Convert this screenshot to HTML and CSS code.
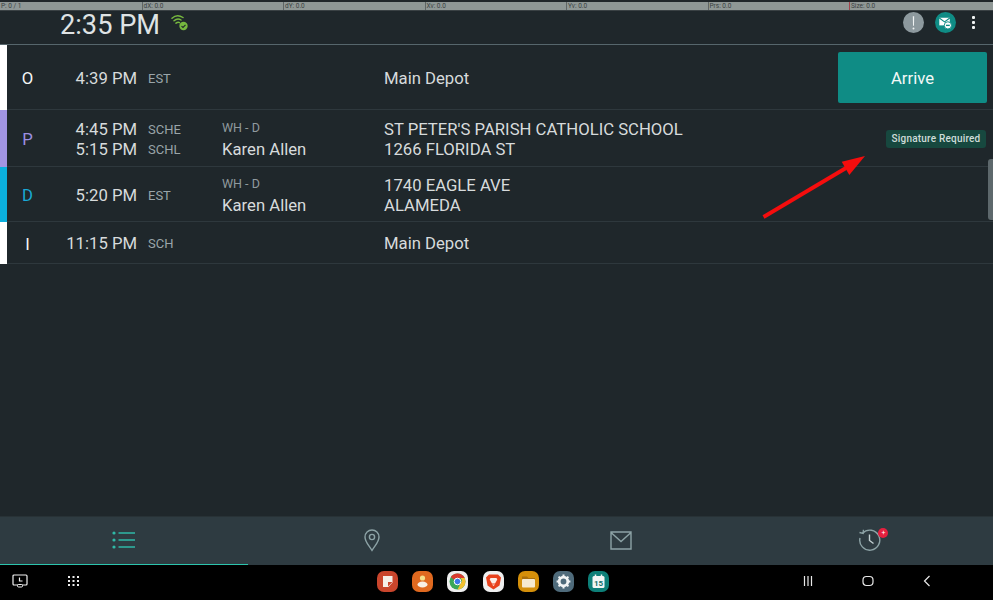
FILE: index.html
```html
<!DOCTYPE html>
<html lang="en">
<head>
<meta charset="utf-8">
<title>Route</title>
<link rel="stylesheet" href="styles.css">
</head>
<body>
<div class="screen">
  <div class="pointer-strip">
    <span class="cell">P: 0 / 1</span><span class="cell">dX: 0.0</span><span class="cell">dY: 0.0</span><span class="cell">Xv: 0.0</span><span class="cell">Yv: 0.0</span><span class="cell">Prs: 0.0</span><span class="cell cell-red">Size: 0.0</span>
  </div>
  <header class="appbar">
    <span class="clock">2:35 PM</span>
    <svg class="wifi" viewBox="0 0 18 18" width="18" height="18">
      <g fill="none" stroke="#76b83f" stroke-width="1.5" stroke-linecap="round">
        <path d="M1 4.200Q6 -.5 12 3.500"/><path d="M3 6.800Q6.500 3.600 10 6"/><path d="M5 9.200Q7 7.600 8.500 8.600"/>
      </g>
      <circle cx="12.500" cy="12" r="4.200" fill="#76b83f"/>
      <path d="M10.500 12.100l1.500 1.400 2.500-2.600" fill="none" stroke="#1f282c" stroke-width="1.100"/>
    </svg>
    <div class="appbar-actions">
      <span class="round round-grey"><svg viewBox="0 0 22 22" width="22" height="22"><path d="M10.300 4h1.400l-.2 10h-1z" fill="#f0f3f3"/><circle cx="11" cy="16.800" r="1" fill="#f0f3f3"/></svg></span>
      <span class="round round-teal"><svg viewBox="0 0 22 22" width="22" height="22"><path d="M4.500 5.500h11v8h-11z" fill="#fff"/><path d="M4.500 5.800l5.500 4 5.500-4" fill="none" stroke="#0f8c85" stroke-width="1.200"/><circle cx="13.500" cy="13.500" r="3.800" fill="#fff" stroke="#0f8c85"/><path d="M11.500 13.500h4" stroke="#0f8c85" stroke-width="1.400"/></svg></span>
      <span class="dots"><i></i><i></i><i></i></span>
    </div>
  </header>

  <main class="stops">
    <div class="stop stop-o">
      <div class="bar bar-white"></div>
      <div class="letter">O</div>
      <div class="times"><span>4:39 PM</span></div>
      <div class="codes"><span>EST</span></div>
      <div class="person"></div>
      <div class="place"><span>Main Depot</span></div>
      <div class="action"><button class="arrive">Arrive</button></div>
    </div>
    <div class="stop stop-p">
      <div class="bar bar-purple"></div>
      <div class="letter letter-purple">P</div>
      <div class="times"><span>4:45 PM</span><span>5:15 PM</span></div>
      <div class="codes"><span>SCHE</span><span>SCHL</span></div>
      <div class="person"><small>WH - D</small><span>Karen Allen</span></div>
      <div class="place"><span>ST PETER'S PARISH CATHOLIC SCHOOL</span><span>1266 FLORIDA ST</span></div>
      <div class="action"><span class="badge">Signature Required</span></div>
    </div>
    <div class="stop stop-d">
      <div class="bar bar-blue"></div>
      <div class="letter letter-blue">D</div>
      <div class="times"><span>5:20 PM</span></div>
      <div class="codes"><span>EST</span></div>
      <div class="person"><small>WH - D</small><span>Karen Allen</span></div>
      <div class="place"><span>1740 EAGLE AVE</span><span>ALAMEDA</span></div>
      <div class="action"></div>
    </div>
    <div class="stop stop-i">
      <div class="bar bar-white"></div>
      <div class="letter">I</div>
      <div class="times"><span>11:15 PM</span></div>
      <div class="codes"><span>SCH</span></div>
      <div class="person"></div>
      <div class="place"><span>Main Depot</span></div>
      <div class="action"></div>
    </div>
    <div class="scroll-thumb"></div>
    <svg class="annotation" viewBox="0 0 110 112" width="110" height="112">
      <path d="M3.500 108L86 59" stroke="#f50d0d" stroke-width="3.800" fill="none"/>
      <path d="M105 47L81.700 52.700 89.300 66z" fill="#f50d0d"/>
    </svg>
  </main>

  <nav class="tabs">
    <div class="tab tab-active">
      <svg viewBox="0 0 24 20" width="24" height="20"><g fill="#2fb8a6"><circle cx="2" cy="3" r="1.600"/><circle cx="2" cy="10" r="1.600"/><circle cx="2" cy="17" r="1.600"/></g><path d="M6.500 3H23M6.500 10H23M6.500 17H23" stroke="#2fb8a6" stroke-width="1.500"/></svg>
    </div>
    <div class="tab">
      <svg viewBox="0 0 16 23" width="16" height="23"><path d="M8 21.500C5 16.500 1 13 1 8a7 7 0 0 1 14 0c0 5-4 8.500-7 13.500z" fill="none" stroke="#8da3a6" stroke-width="1.400"/><circle cx="8" cy="8" r="2.600" fill="none" stroke="#8da3a6" stroke-width="1.400"/></svg>
    </div>
    <div class="tab">
      <svg viewBox="0 0 22 19" width="22" height="19"><path d="M1 1h20v17H1zM1 1.500l10 9 10-9" fill="none" stroke="#8da3a6" stroke-width="1.400"/></svg>
    </div>
    <div class="tab">
      <span class="history">
        <svg viewBox="0 0 23 23" width="23" height="23"><path d="M4.600 4.200A10 10 0 1 1 2 9" fill="none" stroke="#8da3a6" stroke-width="1.400"/><path d="M1.500 3.500l3.600 1 .3-3.800" fill="none" stroke="#8da3a6" stroke-width="1.300"/><path d="M11.500 5.500v6l4 3" fill="none" stroke="#c3d0d2" stroke-width="1.400"/></svg>
        <span class="dot">+</span>
      </span>
    </div>
  </nav>

  <footer class="sysbar">
    <div class="sys-left">
      <svg viewBox="0 0 16 14" width="16" height="14"><path d="M2 1h12a1 1 0 0 1 1 1v8a1 1 0 0 1-1 1H2a1 1 0 0 1-1-1V2a1 1 0 0 1 1-1z" fill="none" stroke="#f2f2f2" stroke-width="1.200"/><path d="M7.500 3.500v3.500h3" fill="none" stroke="#f2f2f2" stroke-width="1.200"/><rect x="5.500" y="10.500" width="5" height="2.500" rx="1" fill="#000" stroke="#f2f2f2"/></svg>
      <svg viewBox="0 0 12 12" width="12" height="12"><g fill="#eee"><rect x="0" y="1" width="2" height="2"/><rect x="4.500" y="1" width="2" height="2"/><rect x="9" y="1" width="2" height="2"/><rect x="0" y="5" width="2" height="2"/><rect x="4.500" y="5" width="2" height="2"/><rect x="9" y="5" width="2" height="2"/><rect x="0" y="9" width="2" height="2"/><rect x="4.500" y="9" width="2" height="2"/><rect x="9" y="9" width="2" height="2"/></g></svg>
    </div>
    <div class="dock">
      <span class="app app-notes"><svg viewBox="0 0 21 21" width="21" height="21"><path d="M6 5h9.500v6.500L11.500 16H6z" fill="#f5efe9"/><path d="M11 11h4.500L11 15.500z" fill="#c9452c"/></svg></span>
      <span class="app app-contacts"><svg viewBox="0 0 21 21" width="21" height="21"><circle cx="10.500" cy="7" r="2.600" fill="#f5e08a"/><ellipse cx="10.500" cy="13.500" rx="5" ry="3" fill="#f8efe4"/></svg></span>
      <span class="app app-light"><svg viewBox="0 0 21 21" width="21" height="21"><circle cx="10.500" cy="10.500" r="8" fill="#3aa757"/><path d="M10.500 2.500a8 8 0 0 1 7.200 4.500H10.500a3.500 3.500 0 0 0-3.200 2L3.800 6a8 8 0 0 1 6.700-3.500z" fill="#d93a2e"/><path d="M17.700 7a8 8 0 0 1-7.200 11.500l3-6a3.500 3.500 0 0 0 0-5.500z" fill="#f3c030"/><circle cx="10.500" cy="10.500" r="3.300" fill="#3b78e7" stroke="#fff"/></svg></span>
      <span class="app app-light"><svg viewBox="0 0 21 21" width="21" height="21"><path d="M6 3.500h9l3 3-1.500 8-6 4-6-4L3 6.500z" fill="#e8421d"/><path d="M7.500 7h6l.8 1.500-2.300 4h-3l-2.300-4z" fill="#fbeee8"/><path d="M9 13.500h3l-1.500 1.500z" fill="#fbeee8"/></svg></span>
      <span class="app app-files"><svg viewBox="0 0 21 21" width="21" height="21"><path d="M4 5.500h5l1.500 1.500H17v2H4z" fill="#a86f0c"/><rect x="4" y="8" width="13" height="8.500" rx="1" fill="#f6ead0"/></svg></span>
      <span class="app app-settings"><svg viewBox="0 0 21 21" width="21" height="21"><circle cx="10.500" cy="10.500" r="4.300" fill="none" stroke="#f1f4f5" stroke-width="2.800"/><g stroke="#f1f4f5" stroke-width="2"><path d="M10.500 3.600v2M10.500 15.400v2M3.600 10.500h2M15.400 10.500h2M5.600 5.600l1.400 1.400M14 14l1.400 1.400M5.600 15.400L7 14M14 7l1.400-1.400"/></g></svg></span>
      <span class="app app-calendar"><svg viewBox="0 0 21 21" width="21" height="21"><rect x="4.500" y="5" width="12" height="12" rx="1.500" fill="#f2f6f5"/><path d="M7.500 3.500v3M13.500 3.500v3" stroke="#f2f6f5" stroke-width="1.500"/><text x="10.500" y="15" class="cal-num" text-anchor="middle">15</text></svg></span>
    </div>
    <div class="sys-right">
      <svg viewBox="0 0 10 12" width="10" height="12"><path d="M1.500 1v10M5 1v10M8.500 1v10" stroke="#e8e8e8" stroke-width="1.200"/></svg>
      <svg viewBox="0 0 12 12" width="12" height="12"><rect x="1" y="1.500" width="10" height="9" rx="3.500" fill="none" stroke="#e8e8e8" stroke-width="1.200"/></svg>
      <svg viewBox="0 0 8 12" width="8" height="12"><path d="M6.500 1L1.500 6l5 5" fill="none" stroke="#e8e8e8" stroke-width="1.200"/></svg>
    </div>
  </footer>
</div>
</body>
</html>
```
FILE: styles.css
```css
* { box-sizing: border-box; }
html, body { margin: 0; padding: 0; }
body { background: #000; font-family: Roboto, "Liberation Sans", sans-serif; }

.screen {
  width: 993px;
  height: 600px;
  display: flex;
  flex-direction: column;
  background: #1f272b;
  overflow: hidden;
}

.pointer-strip {
  height: 11px;
  flex: none;
  display: grid;
  grid-template-columns: repeat(6, 141.5px) 1fr;
  background: #8f9795;
  border-top: 2px solid #202629;
  border-bottom: 1px solid #3a4144;
  font-size: 6.500px;
  line-height: 8px;
  color: #3b4242;
}
.cell { padding-left: 1px; border-left: 1px solid #5f6565; }
.cell:first-child { border-left: 0; }
.cell-red { border-left-color: #a3434c; }

.appbar {
  height: 34px;
  flex: none;
  display: flex;
  align-items: center;
  padding: 0 0 6px 60px;
  border-bottom: 1px solid #56666c;
}
.clock { font-size: 27.200px; line-height: 30px; color: #dfe3e4; }
.wifi { margin: -4px 0 0 11px; }
.appbar-actions {
  margin: -4px 0 0 auto;
  display: flex;
  align-items: center;
  padding-right: 18px;
}
.round {
  width: 21px;
  height: 21px;
  border-radius: 50%;
  display: flex;
  align-items: center;
  justify-content: center;
  margin-right: 11px;
}
.round-grey { background: #8d999e; }
.round-teal { background: #0f8c85; }
.dots { display: flex; flex-direction: column; gap: 2px; margin-left: 5px; }
.dots i { display: block; width: 3px; height: 3px; background: #f1f4f4; border-radius: 1px; }

.stops { flex: 1; position: relative; min-height: 0; }
.stop {
  display: grid;
  grid-template-columns: 7px 41px 89px 85px 162px 1fr auto;
  align-items: center;
  padding-top: 3px;
  border-bottom: 1px solid #2e383d;
  color: #d7dbdc;
  font-size: 16.700px;
}
.stop-o { height: 65px; }
.stop-p { height: 57px; }
.stop-d { height: 55px; }
.stop-i { height: 42px; }
.bar { align-self: stretch; margin: -3px 0 -1px; }
.bar-white { background: #fff; }
.bar-purple { background: #a295e3; }
.bar-blue { background: #0bb0de; }
.letter { text-align: center; font-size: 16.700px; color: #f4f6f6; }
.letter-purple { color: #9c8fe0; }
.letter-blue { color: #19a9d6; }
.times { display: flex; flex-direction: column; align-items: flex-end; line-height: 20px; }
.codes {
  display: flex;
  flex-direction: column;
  padding-left: 11px;
  font-size: 13px;
  line-height: 20px;
  color: #9aa5a9;
}
.person { display: flex; flex-direction: column; }
.person small { font-size: 12.500px; line-height: 18px; color: #8f9a9e; margin-bottom: 3px; }
.person span { line-height: 20px; }
.place { display: flex; flex-direction: column; line-height: 20px; }
.action { display: flex; justify-content: flex-end; padding-right: 6px; margin-top: -3px; }
.arrive {
  width: 149px;
  height: 51px;
  border: 0;
  border-radius: 2px;
  padding: 2px 0 0;
  background: #0f8c85;
  color: #f2f8f7;
  font: 16.700px Roboto, "Liberation Sans", sans-serif;
}
.badge {
  width: 100px;
  height: 18px;
  margin: 1px 1px -1px 0;
  border-radius: 3px;
  background: #17483f;
  color: #cfdcd9;
  font-size: 10px;
  font-weight: 500;
  line-height: 18px;
  text-align: center;
  letter-spacing: .2px;
}

.scroll-thumb {
  position: absolute;
  right: 0;
  top: 114px;
  width: 5px;
  height: 61px;
  background: #5d686c;
  border-radius: 3px 0 0 3px;
}
.annotation { position: absolute; left: 760px; top: 64px; }

.tabs {
  height: 49px;
  flex: none;
  display: grid;
  grid-template-columns: repeat(4, 1fr);
  background: #2e3b41;
  border-top: 1px solid #283236;
}
.tab { display: flex; align-items: center; justify-content: center; padding-bottom: 2px; }
.tab-active { border-bottom: 1px solid #2cc4ad; padding-bottom: 1px; }
.history { position: relative; display: flex; margin-left: 2px; }
.dot {
  position: absolute;
  top: -1px;
  right: -7px;
  width: 10px;
  height: 10px;
  border-radius: 50%;
  background: #e5203f;
  color: #fff;
  font-size: 7px;
  line-height: 10px;
  text-align: center;
}

.sysbar {
  height: 35px;
  flex: none;
  background: #000;
  position: relative;
  display: flex;
  align-items: center;
  justify-content: space-between;
  padding: 0 62px 3px 12px;
}
.sys-left { display: flex; align-items: center; gap: 40px; }
.dock {
  position: absolute;
  left: 377px;
  top: 6px;
  display: flex;
  gap: 14.200px;
}
.app {
  width: 21px;
  height: 21px;
  border-radius: 7px;
  display: block;
}
.app svg { display: block; }
.app-notes { background: #c9452c; }
.app-contacts { background: #e0691f; }
.app-light { background: #efefef; }
.app-files { background: #d48f0a; }
.app-settings { background: #4f6b7b; }
.app-calendar { background: #0d7f78; }
.cal-num { font: 700 8px Roboto, sans-serif; fill: #0d6f69; }
.sys-right { display: flex; align-items: center; gap: 49px; }
```
